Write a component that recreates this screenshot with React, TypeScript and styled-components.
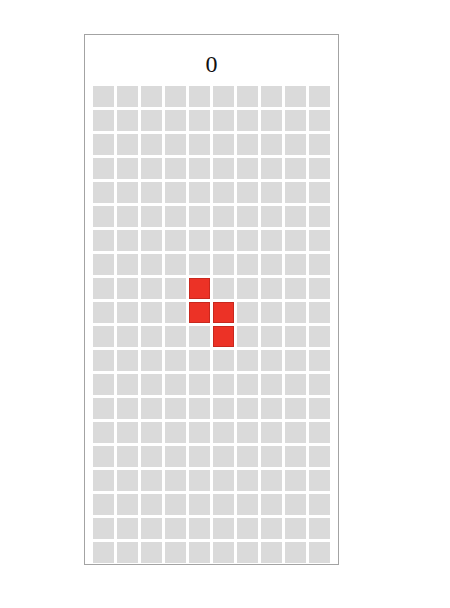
import React, { FC } from "react";
import styled, { createGlobalStyle } from "styled-components";

const COLS = 10;
const ROWS = 20;

// active piece, [row, col]
const piece = [
  [8, 4],
  [9, 4],
  [9, 5],
  [10, 5],
];

const GlobalStyle = createGlobalStyle`
  body {
    margin: 0;
    background: #fff;
    font-family: "Liberation Serif", "Times New Roman", serif;
  }
`;

const Page = styled.div`
  padding: 34px 0 0 84px;
`;

const Board = styled.div`
  width: 255px;
  box-sizing: border-box;
  border: 1px solid #a3a3a3;
  padding: 0 8px 1px 8px;
`;

const Score = styled.div`
  height: 51px;
  display: flex;
  align-items: center;
  justify-content: center;
  font-size: 24px;
  color: #111;
  padding-top: 8px;
  box-sizing: border-box;
`;

const Grid = styled.div`
  display: grid;
  grid-template-columns: repeat(${COLS}, 21px);
  grid-auto-rows: 21px;
  gap: 3px;
`;

const Cell = styled.div<{ $filled?: boolean }>`
  box-sizing: border-box;
  background: ${(p) => (p.$filled ? "#ec3226" : "#dadada")};
  border: 1px solid ${(p) => (p.$filled ? "#c8281e" : "#dadada")};
`;

const App: FC = () => {
  const cells = [];
  for (let r = 0; r < ROWS; r++) {
    for (let c = 0; c < COLS; c++) {
      const filled = piece.some(([pr, pc]) => pr === r && pc === c);
      cells.push(<Cell key={`${r}-${c}`} $filled={filled} />);
    }
  }

  return (
    <>
      <GlobalStyle />
      <Page>
        <Board>
          <Score>0</Score>
          <Grid>{cells}</Grid>
        </Board>
      </Page>
    </>
  );
};

export default App;
